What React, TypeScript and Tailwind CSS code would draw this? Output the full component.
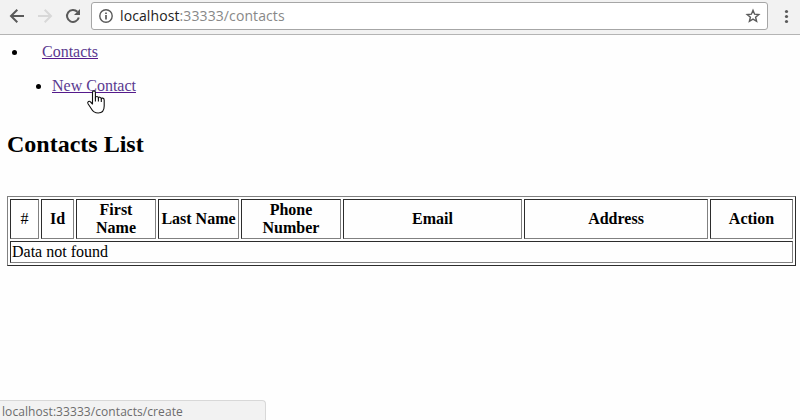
import React from "react";

const columns = ["#", "Id", "First Name", "Last Name", "Phone Number", "Email", "Address", "Action"];
const widths = ["w-[29px]", "w-[33px]", "w-[80px]", "w-[81px]", "w-[100px]", "w-[179px]", "w-[184px]", "w-[83px]"];
const cell = "box-border border border-t-[#2c2c2c] border-l-[#2c2c2c] border-b-[#808080] border-r-[#808080] p-px";

function Toolbar() {
  return (
    <header className="flex h-[35px] items-start border-b border-[#b4b4b4] bg-[#f2f2f2]">
      <svg className="h-[34px] w-[91px] shrink-0" viewBox="0 0 91 34" fill="none" strokeWidth="2">
        <path d="M24 16H11.5M17.3 9.7L11 16L17.3 22.3" stroke="#5a5a5a" />
        <path d="M38 16H50.5M44.7 9.7L51 16L44.7 22.3" stroke="#d8d8d8" />
        <path d="M77.4 11.8A6 6 0 1 0 78.8 17.5" stroke="#5a5a5a" />
        <path d="M80 9V15H74Z" fill="#5a5a5a" />
      </svg>
      <div className="mt-[2px] flex h-7 w-[677px] items-center rounded-[3px] border border-[#a6a6a6] bg-white pl-[7px] pr-[6px]">
        <svg className="size-4 shrink-0" viewBox="0 0 16 16" fill="none" stroke="#5a5a5a">
          <circle cx="7" cy="8" r="6.2" strokeWidth="1.4" />
          <path d="M7 7V11.5M7 4.4V6" strokeWidth="1.7" />
        </svg>
        <span className="ml-[5px] grow whitespace-nowrap font-['Open_Sans',sans-serif] text-[14px] leading-5 tracking-[0.1px] text-[#888]">
          <span className="text-[#222]">localhost</span>:33333/contacts
        </span>
        <svg className="size-4" viewBox="0 0 16 16" fill="none" stroke="#5a5a5a" strokeWidth="1.4">
          <path d="M8 2.3L9.6 6.2L13.8 6.5L10.6 9.2L11.6 13.3L8 11.1L4.4 13.3L5.4 9.2L2.2 6.5L6.4 6.2Z" />
        </svg>
      </div>
      <svg className="h-[34px] w-8" viewBox="0 0 32 34" fill="#5a5a5a">
        <circle cx="18.5" cy="11.5" r="1.6" />
        <circle cx="18.5" cy="16.5" r="1.6" />
        <circle cx="18.5" cy="21.5" r="1.6" />
      </svg>
    </header>
  );
}

export default function App() {
  return (
    <div className="relative flex h-[420px] w-[800px] flex-col overflow-hidden bg-[#fefefe] font-['Liberation_Serif',serif] text-[16px] leading-[18px] text-black">
      <Toolbar />
      <nav className="pt-2">
        <div className="flex items-center pl-[12px]">
          <span className="size-[5px] rounded-full bg-black" />
          <a className="ml-[25px] text-[#5a3a90] underline decoration-[#551a8b]">Contacts</a>
        </div>
        <div className="mt-4 flex items-center pl-[36px]">
          <span className="size-[5px] rounded-full bg-black" />
          <a className="ml-[11px] text-[#5a3a90] underline decoration-[#551a8b]">New Contact</a>
        </div>
      </nav>
      <h2 className="mt-[35px] pl-[7px] text-[24px] font-bold leading-[28px]">Contacts List</h2>
      <table className="ml-[7px] mt-[38px] w-[789px] table-fixed border-separate border-spacing-[2px] border border-b-[#2c2c2c] border-l-[#808080] border-r-[#2c2c2c] border-t-[#808080]">
        <colgroup>
          {widths.map((w) => <col key={w} className={w} />)}
        </colgroup>
        <thead>
          <tr className="h-10">
            {columns.map((c) => (
              <th key={c} className={`${cell} text-center align-middle ${c === "#" ? "font-normal" : "font-bold"}`}>{c}</th>
            ))}
          </tr>
        </thead>
        <tbody>
          <tr className="h-[22px]">
            <td colSpan={8} className={cell}>Data not found</td>
          </tr>
        </tbody>
      </table>
      <div className="absolute bottom-0 left-0 h-5 w-[266px] rounded-tr-[4px] border-r border-t border-[#d8d8d8] bg-[#f2f2f2] pl-[2px] pt-[2px] font-['Open_Sans',sans-serif] text-[12px] leading-[18px] tracking-[0.07px] text-[#6c6c6c]">
        localhost:33333/contacts/create
      </div>
      <svg className="absolute left-[86px] top-[90px] h-6 w-5" viewBox="0 0 20 24" fill="#fff" stroke="#111" strokeWidth="1.1" strokeLinejoin="round">
        <path d="M6.5 14V2.2C6.5.4 9.4.4 9.4 2.2V8C9.4 6 12.4 6 12.4 8.2C12.4 6.6 15.3 6.8 15.3 9C15.3 7.6 18.2 7.8 18.2 10V16C18.2 20.3 16 23 12.2 23C8.5 23 6.5 21 5 18.2L2 13.7C1 11.8 3.3 10.5 4.6 12Z" />
        <path d="M9.4 7.5V11.5M12.4 8V11.5M15.3 9V12" fill="none" />
      </svg>
    </div>
  );
}
